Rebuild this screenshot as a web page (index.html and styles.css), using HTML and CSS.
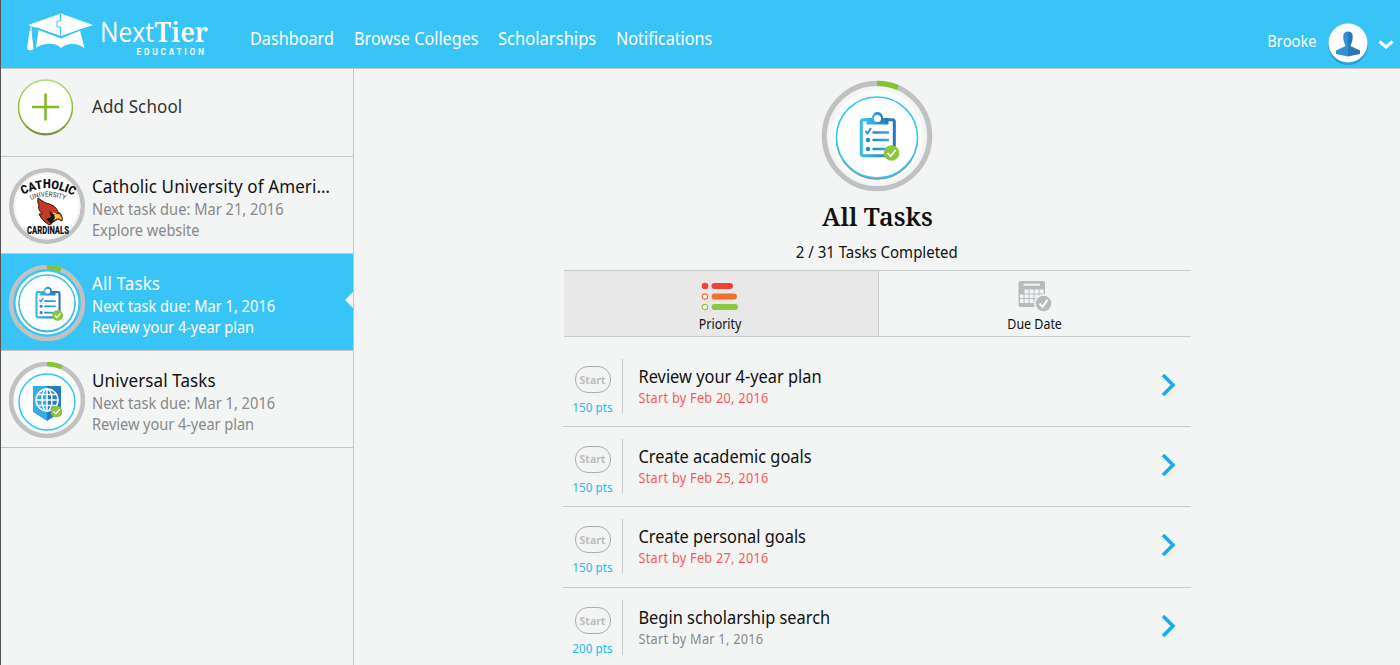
FILE: index.html
```html
<!DOCTYPE html>
<html lang="en">
<head>
<meta charset="utf-8">
<title>NextTier Education</title>
<link rel="stylesheet" href="styles.css">
</head>
<body>
<svg class="defs" width="0" height="0" aria-hidden="true">
  <defs>
    <linearGradient id="blue" x1="0" x2="1" y1="0" y2="0"><stop offset="0" stop-color="#35baf0"/><stop offset="1" stop-color="#2676bd"/></linearGradient>
    <linearGradient id="bar" gradientUnits="userSpaceOnUse" x1="-6" x2="13" y1="0" y2="0"><stop offset="0" stop-color="#2187c8"/><stop offset="1" stop-color="#42a9df"/></linearGradient>
    <linearGradient id="green" x1="0" x2="0" y1="0" y2="1"><stop offset="0" stop-color="#b2dc72"/><stop offset="1" stop-color="#70a71c"/></linearGradient>
    <radialGradient id="halo"><stop offset=".86" stop-color="#fff"/><stop offset="1" stop-color="#fff" stop-opacity=".35"/></radialGradient>
    <symbol id="done" viewBox="-8 -8 16 16"><circle r="7.8" fill="#8cc63f"/><path d="M-4 0L-1 3.2L4.3-3" fill="none" stroke="#fff" stroke-width="1.7"/></symbol>
    <symbol id="clipboard" viewBox="-20 -26 42 50">
      <rect x="-16.2" y="-17.2" width="33" height="36" rx="2" fill="none" stroke="url(#blue)" stroke-width="3"/>
      <path d="M-11-19H-5C-6-27 6-27 5-19H11V-12.500H-11Z" fill="url(#blue)"/>
      <circle cy="-18.500" r="4.600" fill="#fff" stroke="url(#blue)" stroke-width="2"/>
      <path d="M-12-6L-10-3.500L-6.500-9" fill="none" stroke="#2a88c9" stroke-width="1.800"/>
      <circle cx="-9.500" cy="3" r="2.200" fill="#2a88c9"/><circle cx="-9.500" cy="12" r="2.200" fill="#2a88c9"/>
      <path d="M-4-4.500H10.500M-4 3H10.500M-4 12H7" stroke="url(#bar)" stroke-width="2.400" stroke-linecap="round"/>
      <use href="#done" x="6" y="8" width="16" height="16"/>
    </symbol>
  </defs>
</svg>
<header class="topbar">
  <a class="brand">
    <svg class="cap" width="68" height="42" viewBox="0 0 68 42"><path d="M1 13L34 1.500L66 13L34 24Z" fill="#fff"/><path d="M11.500 18L34 26.500L53 18.500L57.500 36Q49 31 43 32Q37 33 34 36Q28 31 21 32Q14 32 9 36Z" fill="#fff"/><path d="M4 13V20M4 19L6 37Q3 39 .5 37L3 19Z" fill="#fff" stroke="#fff"/><path d="M33.500 2V9H30V15H33.500V23.500M9 15.500L34 25L60 15.500" fill="none" stroke="#36c3f6"/></svg>
    <svg class="wordmark" width="116" height="44" viewBox="0 0 116 44"><text x="4" y="28.500" class="next" textLength="54" lengthAdjust="spacingAndGlyphs">Next</text><text x="58.500" y="28.500" class="tier" textLength="53.500" lengthAdjust="spacingAndGlyphs">Tier</text><text x="40.500" y="41.500" class="edu" textLength="69">EDUCATION</text></svg>
  </a>
  <nav class="nav"><a class="n1">Dashboard</a><a class="n2">Browse Colleges</a><a class="n3">Scholarships</a><a class="n4">Notifications</a></nav>
  <div class="user"><span>Brooke</span>
    <svg width="42" height="44" viewBox="0 0 42 44"><circle cx="21" cy="23" r="20" fill="#208fbd" opacity=".65"/><circle cx="21" cy="21" r="19.500" fill="#fff"/><path d="M21 9.500C15 9.500 16 16 17 20L18.500 24L9 28.500V32L21 34.500Z" fill="#2e93d1"/><path d="M21 9.500C27 9.500 26 16 25 20L23.500 24L33 28.500V32L21 34.500Z" fill="#277ab9"/></svg>
    <svg class="caret" width="16" height="10" viewBox="0 0 16 10"><path d="M1.500 1.500L8 7L14.500 1.500" fill="none" stroke="#fff" stroke-width="3"/></svg>
  </div>
</header>
<div class="shell">
  <aside class="sidebar">
    <a class="item add">
      <svg width="76" height="78" viewBox="-36.500 -38 76 78"><circle r="27" cy="1.500" fill="#777"/><circle r="27" fill="#fff" stroke="url(#green)" stroke-width="1.500"/><path d="M-13.500 0H13.500M0-13.500V13.500" stroke="#80bc26" stroke-width="2.600"/></svg>
      <div class="label"><b>Add School</b></div>
    </a>
    <a class="item">
      <svg width="76" height="76" viewBox="-38 -38 76 76"><circle r="35.700" fill="#fff" stroke="#c1c1c1" stroke-width="4.600"/><circle r="32.500" fill="none" stroke="#f2f3f3" stroke-width="2"/>
        <path id="arcTop" d="M-24-11Q0-24.500 27-10" fill="none"/><path id="arcMid" d="M-16-6Q0-13 18-6" fill="none"/>
        <text class="team"><textPath href="#arcTop" textLength="53" lengthAdjust="spacingAndGlyphs">CATHOLIC</textPath></text>
        <text class="univ"><textPath href="#arcMid" textLength="35" lengthAdjust="spacingAndGlyphs">UNIVERSITY</textPath></text>
        <path d="M-9-8Q-5-5-1-3Q9-1 11 6Q16 8 15 15L11 13L6 14Q5 19 2 19Q-6 14-8 8L-5 8Q-10 2-8-1Q-10-3-9-8Z" fill="#c53a27" stroke="#351812" stroke-width="1"/>
        <path d="M2 5L7 9L12 6L10 14L4 18L-1 13L4 11Z" fill="#191817"/><path d="M7 9Q13 5 15 14L11 12L6 15Q9 12 7 9Z" fill="#f3c557"/><path d="M6 7L9 8" stroke="#fff"/>
        <text x="-20" y="28" class="team base" textLength="42" lengthAdjust="spacingAndGlyphs">CARDINALS</text>
      </svg>
      <div class="label"><b>Catholic University of Ameri…</b><span>Next task due: Mar 21, 2016</span><span>Explore website</span></div>
    </a>
    <a class="item active">
      <svg width="76" height="76" viewBox="-38 -38 76 76"><circle r="31.500" fill="#fff"/><circle r="36" fill="none" stroke="#c1c1c1" stroke-width="4.500"/><path d="M0-36A36 36 0 0 1 14-33.200" fill="none" stroke="#83c52d" stroke-width="4.500"/><circle r="28" cy="1" fill="none" stroke="#7c8d95"/><circle r="28" fill="#fff" stroke="#36c3f6" stroke-width="1.500"/><use href="#clipboard" x="-13.500" y="-17" width="30" height="35"/></svg>
      <div class="label"><b>All Tasks</b><span>Next task due: Mar 1, 2016</span><span>Review your 4-year plan</span></div>
      <i class="notch"></i>
    </a>
    <a class="item">
      <svg width="76" height="76" viewBox="-38 -38 76 76"><circle r="33" fill="url(#halo)"/><circle r="36" fill="none" stroke="#c1c1c1" stroke-width="4.500"/><path d="M0-36A36 36 0 0 1 15-32.700" fill="none" stroke="#83c52d" stroke-width="4.500"/><circle r="28" cy="2" fill="#fff" stroke="#36c3f6" stroke-width="1.500"/><path d="M-14-14H0V21L-14 12Z" fill="#36aae4"/><path d="M0-14H14V12L0 21Z" fill="#257cc0"/><g fill="none" stroke="#fff" stroke-width="1.500"><circle r="11"/><ellipse rx="5" ry="11"/><path d="M0-11V11M-11 0H11M-9.500-5.500H9.500M-9.500 5.500H9.500"/></g><use href="#done" x="3.500" y="5.500" width="12" height="12"/></svg>
      <div class="label"><b>Universal Tasks</b><span>Next task due: Mar 1, 2016</span><span>Review your 4-year plan</span></div>
    </a>
  </aside>
  <main class="main">
    <svg class="hero" width="112" height="112" viewBox="-56 -56 112 112"><circle r="46" fill="#fff" opacity=".6"/><circle r="52.700" fill="none" stroke="#c1c1c1" stroke-width="5.200"/><path d="M0-52.700A52.700 52.700 0 0 1 21-48.300" fill="none" stroke="#83c52d" stroke-width="5.200"/><circle r="41" cy="2.800" fill="#888"/><circle r="40.500" cy="1.500" fill="#fff" stroke="#36c3f6" stroke-width="1.500"/><use href="#clipboard" x="-20" y="-25" width="43" height="50"/></svg>
    <h1>All Tasks</h1>
    <p class="count">2 / 31 Tasks Completed</p>
    <div class="tabs">
      <a class="tab selected"><svg width="38" height="30" viewBox="0 0 38 30"><circle cx="4" cy="4" r="3.300" fill="#f04239"/><g fill="#fff" stroke-width="1.200"><circle cx="4" cy="14.500" r="2.700" stroke="#f26c34"/><circle cx="4" cy="25" r="2.700" stroke="#8dc63f"/></g><g stroke-width="6" stroke-linecap="round"><path d="M13.500 4H29" stroke="#f04239"/><path d="M13.500 14.500H33" stroke="#f26f2e"/><path d="M13.500 25H34" stroke="#8dc63f"/></g></svg><span>Priority</span></a>
      <a class="tab"><svg width="34" height="32" viewBox="0 0 34 32"><rect x=".5" y="1" width="26.500" height="26" rx="2" fill="#b8babd"/><path d="M5.500 4.700H22" stroke="#f3f5f5" stroke-width="2"/><path d="M6.500 9.500h4v4h-4zm5 0h4v4h-4zm5 0h4v4h-4zm5 0h4v4h-4zM2 14.500h3.500v3.500H2zm4.500 0h4v3.500h-4zm5 0h4v3.500h-4zm5 0h4v3.500h-4zM2 19h3.500v4H2zm4.500 0h4v4h-4zm5 0h4v4h-4z" fill="#f3f5f5"/><circle cx="25.500" cy="23.500" r="9.500" fill="#f3f5f5"/><circle cx="25.500" cy="23.500" r="7.800" fill="#b8babd"/><path d="M21.500 23.500L24.500 26.800L29.500 19.800" fill="none" stroke="#fff" stroke-width="2"/></svg><span>Due Date</span></a>
    </div>
    <ul class="tasks">
      <li><div class="points"><button>Start</button><em>150 pts</em></div><div class="task"><b>Review your 4-year plan</b><span class="late">Start by Feb 20, 2016</span></div><svg class="go" width="16" height="24" viewBox="0 0 16 24"><path d="M2 2L12 12L2 22" fill="none" stroke="#1eaae7" stroke-width="3.600"/></svg></li>
      <li><div class="points"><button>Start</button><em>150 pts</em></div><div class="task"><b>Create academic goals</b><span class="late">Start by Feb 25, 2016</span></div><svg class="go" width="16" height="24" viewBox="0 0 16 24"><path d="M2 2L12 12L2 22" fill="none" stroke="#1eaae7" stroke-width="3.600"/></svg></li>
      <li><div class="points"><button>Start</button><em>150 pts</em></div><div class="task"><b>Create personal goals</b><span class="late">Start by Feb 27, 2016</span></div><svg class="go" width="16" height="24" viewBox="0 0 16 24"><path d="M2 2L12 12L2 22" fill="none" stroke="#1eaae7" stroke-width="3.600"/></svg></li>
      <li><div class="points"><button>Start</button><em>200 pts</em></div><div class="task"><b>Begin scholarship search</b><span>Start by Mar 1, 2016</span></div><svg class="go" width="16" height="24" viewBox="0 0 16 24"><path d="M2 2L12 12L2 22" fill="none" stroke="#1eaae7" stroke-width="3.600"/></svg></li>
    </ul>
  </main>
</div>
</body>
</html>
```
FILE: styles.css
```css
* { box-sizing: border-box; }
body { margin: 0; height: 665px; overflow: hidden; background: #f3f5f5; border-left: 1px solid #555; font-family: "Noto Sans", "Open Sans", sans-serif; color: #111; }
.defs { position: absolute; }
svg { display: block; flex: none; }
.topbar { height: 69px; background: #38c4f6; border-bottom: 1px solid #c5c9ca; display: flex; align-items: flex-start; color: #fff; }
.brand { display: flex; width: 249px; padding-left: 26px; }
.cap { margin-top: 12px; }
.wordmark { margin: 13px 0 0 1px; }
.wordmark text { fill: #fff; }
.next { font: 400 27px "Open Sans", sans-serif; }
.tier { font: 600 27px "Noto Serif", "DejaVu Serif", serif; }
.edu { font: 600 8.500px "Roboto", sans-serif; letter-spacing: 1.500px; }
.team { font: 900 12px "Roboto", "Open Sans", sans-serif; fill: #111; }
.base { font-size: 10.500px; }
.univ { font: 400 7px "Roboto", sans-serif; fill: #333; }
.nav { display: flex; padding-top: 25px; font-size: 18px; line-height: 26px; }
.nav a { transform: scaleX(.9); transform-origin: left; white-space: nowrap; }
.n1 { width: 104px; } .n2 { width: 144px; } .n3 { width: 118px; }
.nav .n3 { transform: scaleX(.92); }
.user { margin-left: auto; display: flex; align-items: flex-start; padding: 22px 6px 0 0; }
.user span { font-size: 16px; line-height: 38px; transform: scaleX(.92); transform-origin: right; margin-right: 10px; }
.caret { margin: 18px 0 0 9px; }
.shell { display: flex; height: 596px; }
.sidebar { width: 353px; border-right: 1px solid #c5c7c7; }
.item { height: 97px; display: flex; position: relative; padding: 11px 0 0 8px; border-bottom: 1px solid #c5c7c7; }
.item.add { height: 88px; padding-top: 0; }
.label { display: flex; flex-direction: column; margin: 5px 0 0 7px; font-size: 15.500px; line-height: 20.500px; color: #888; white-space: nowrap; transform: scaleX(.945); transform-origin: left; height: 67px; }
.label b { font-weight: 400; font-size: 18px; line-height: 26px; letter-spacing: .12px; color: #111; }
.label span:last-child { letter-spacing: -.08px; }
.add .label { margin-top: 24px; height: 26px; }
.add .label b { color: #333; }
.active .label, .active .label b { color: #fff; }
.active { background: #38c4f6; }
.notch { position: absolute; right: 0; top: 38px; border: 8px solid transparent; border-left: 0; border-right-color: #f3f5f5; }
.main { flex: 1; display: flex; flex-direction: column; align-items: center; }
.main > * { flex: none; }
.hero { margin: 11px 0 0 0; }
h1 { margin: 5px 0 0; font: 600 26px/38px "Noto Serif", "DejaVu Serif", serif; transform: scaleX(.965); }
.count { margin: 5px 0 0; font-size: 15.500px; line-height: 24px; transform: scaleX(.968); }
.tabs { width: 627px; height: 67px; display: flex; margin: 6px 0 0 1px; border: solid #c9cbcb; border-width: 1px 0; }
.tab { flex: 1; display: flex; flex-direction: column; align-items: center; font-size: 13.500px; line-height: 20px; }
.tab.selected { flex: none; width: 315px; padding-right: 2px; background: #e8e8e8; border-right: 1px solid #c9cbcb; }
.tab svg { margin-top: 11px; }
.tab + .tab svg { margin-top: 9px; }
.tab span { margin-top: 2px; transform: scaleX(.92); }
.tasks { list-style: none; width: 628px; margin: 9px 0 0; padding: 0; }
.tasks li { height: 80.700px; display: flex; border-bottom: 1px solid #c9cbcb; padding-top: 12px; }
.tasks li:first-child { padding-top: 13px; }
.points { width: 60px; height: 55px; border-right: 1px solid #c9cbcb; display: flex; flex-direction: column; align-items: center; }
.points > * { flex: none; }
.points button { width: 36px; height: 27px; margin-top: 7px; padding: 0; border: 1.500px solid #aaadb0; border-radius: 13px; background: none; font: 700 10.500px "Noto Sans", sans-serif; color: #babdbf; }
.points em { font-style: normal; font-size: 12.500px; line-height: 16px; margin-top: 7px; color: #27b9ed; transform: scaleX(.94); }
.task { display: flex; flex-direction: column; padding-left: 17px; transform: scaleX(.91); transform-origin: left; white-space: nowrap; font-size: 14px; line-height: 18px; letter-spacing: .28px; color: #888; margin-top: 4px; }
.task b { font-weight: 400; font-size: 18px; line-height: 26px; letter-spacing: 0; color: #111; }
.task .late { color: #f95a5d; }
.go { margin: 14px 14px 0 auto; }
```
